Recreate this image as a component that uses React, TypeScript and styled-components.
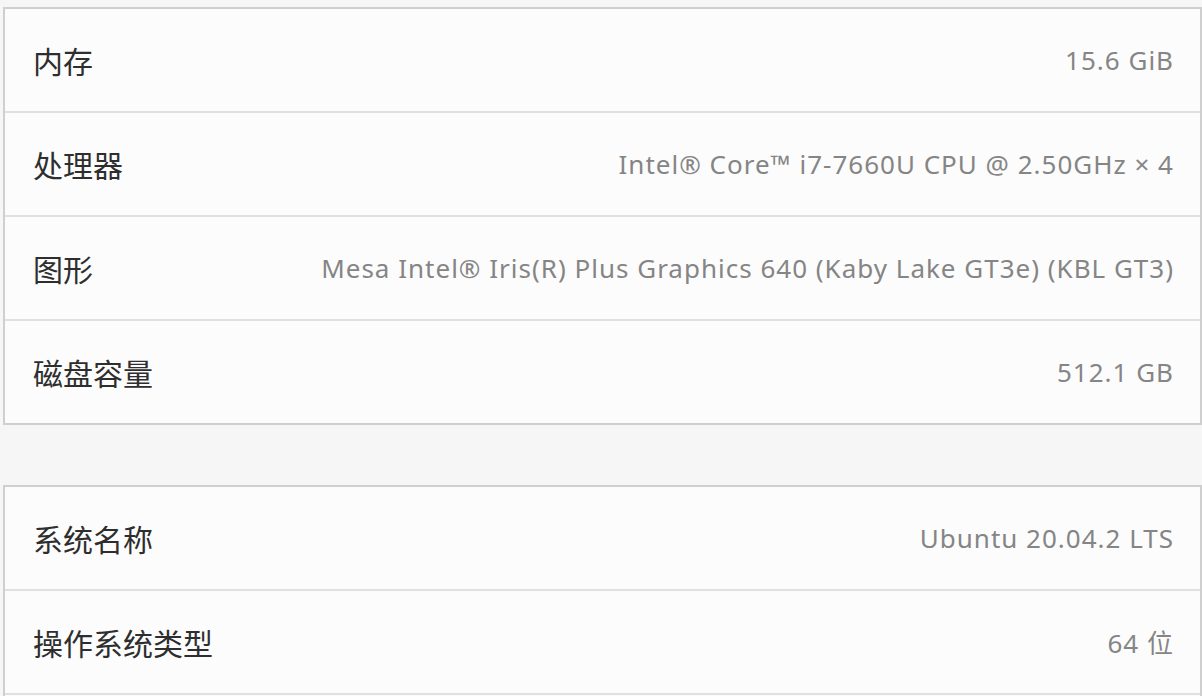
import React from 'react';
import styled, { createGlobalStyle } from 'styled-components';

const hardware = [
    { label: '内存', value: '15.6 GiB' },
    { label: '处理器', value: 'Intel® Core™ i7-7660U CPU @ 2.50GHz × 4' },
    { label: '图形', value: 'Mesa Intel® Iris(R) Plus Graphics 640 (Kaby Lake GT3e) (KBL GT3)' },
    { label: '磁盘容量', value: '512.1 GB' },
];

// the list goes on below the window edge
const system = [
    { label: '系统名称', value: 'Ubuntu 20.04.2 LTS' },
    { label: '操作系统类型', value: '64 位' },
];

export default function App() {
    return (
        <>
            <GlobalStyle />
            <Page>
                <Card>
                    {hardware.map((row) => (
                        <Row key={row.label}>
                            <Label>{row.label}</Label>
                            <Value>{row.value}</Value>
                        </Row>
                    ))}
                </Card>
                <Card $continues>
                    {system.map((row) => (
                        <Row key={row.label}>
                            <Label>{row.label}</Label>
                            <Value>{row.value}</Value>
                        </Row>
                    ))}
                </Card>
            </Page>
        </>
    );
}

type CardProps = {
    $continues?: boolean;
}

const GlobalStyle = createGlobalStyle`
    html, body {
        margin: 0;
        padding: 0;
        background: #f6f6f6;
        overflow: hidden;
    }
    body {
        font-family: "Noto Sans", "Noto Sans CJK SC", sans-serif;
    }
`

const Page = styled.div`
    display: flex;
    flex-direction: column;
    row-gap: 60px;
    padding: 7px 0 0 3px;
    height: 696px;
    box-sizing: border-box;
`

const Row = styled.div`
    display: flex;
    align-items: center;
    justify-content: space-between;
    height: 102px;
    padding: 0 26px 0 28px;
    border-bottom: 2px solid #e0e0e0;
`

const Card = styled.section<CardProps>`
    display: flex;
    flex-direction: column;
    flex: ${props => props.$continues ? '1' : 'none'};
    background: #fcfcfc;
    border: 2px solid #cfcfcf;
    border-bottom: ${props => props.$continues ? 'none' : '2px solid #cfcfcf'};

    ${Row}:last-child {
        border-bottom: ${props => props.$continues ? '2px solid #e0e0e0' : 'none'};
    }
`

const Label = styled.span`
    font-family: "Noto Sans CJK SC", "Noto Sans", sans-serif;
    font-size: 30px;
    color: #2e2e2e;
`

const Value = styled.span`
    font-family: "Noto Sans", "Noto Sans CJK SC", sans-serif;
    font-size: 26px;
    letter-spacing: 1px;
    color: #858585;
    white-space: nowrap;
`
